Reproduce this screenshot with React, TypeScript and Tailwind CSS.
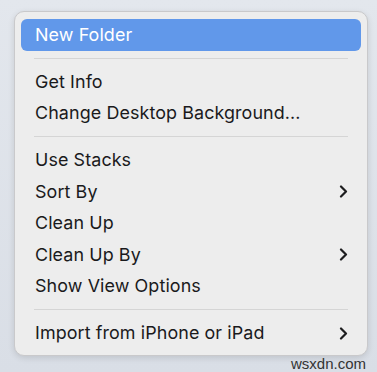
import { Fragment } from 'react'

type Item = { label: string; sub?: boolean; active?: boolean }

const groups: Item[][] = [
  [{ label: 'New Folder', active: true }],
  [{ label: 'Get Info' }, { label: 'Change Desktop Background...' }],
  [
    { label: 'Use Stacks' },
    { label: 'Sort By', sub: true },
    { label: 'Clean Up' },
    { label: 'Clean Up By', sub: true },
    { label: 'Show View Options' },
  ],
  [{ label: 'Import from iPhone or iPad', sub: true }],
]

function Chevron() {
  return (
    <svg width="9" height="13" viewBox="0 0 9 13" fill="none">
      <path d="M2 1.5 L7 6.5 L2 11.5" stroke="#1d1d1f" strokeWidth="2.2" strokeLinecap="round" strokeLinejoin="round" />
    </svg>
  )
}

export default function App() {
  return (
    <div
      className="relative w-[377px] h-[372px] bg-gradient-to-b from-[#e3e7ed] to-[#d9dee6] pt-[11px] pl-[14px]"
      style={{ fontFamily: 'Inter, "Noto Sans", sans-serif' }}
    >
      <div className="w-[354px] rounded-[10px] border border-[#c9c9cb] bg-[#ededed] px-[6px] pt-[7px] pb-[6px] shadow-[0_2px_6px_rgba(0,0,0,0.12)]">
        {groups.map((group, gi) => (
          <Fragment key={gi}>
            {gi > 0 && (
              <div className="h-[15.5px] flex items-center px-[13px]">
                <div className="h-px w-full bg-[#d5d5d5]" />
              </div>
            )}
            {group.map((item) => (
              <div
                key={item.label}
                className={
                  item.active
                    ? 'h-[31.5px] flex items-center justify-between pl-[14px] pr-[13px] rounded-[6px] bg-[#6198ea] text-white'
                    : 'h-[31.5px] flex items-center justify-between pl-[14px] pr-[13px] text-[#1a1a1c]'
                }
              >
                <span className="text-[17.9px] tracking-[0.1px] pt-px">{item.label}</span>
                {item.sub && <Chevron />}
              </div>
            ))}
          </Fragment>
        ))}
      </div>
      <span className="absolute right-[11px] top-[353px] text-[15px] text-[#333]" style={{ fontFamily: '"Liberation Sans", sans-serif' }}>
        wsxdn.com
      </span>
    </div>
  )
}
